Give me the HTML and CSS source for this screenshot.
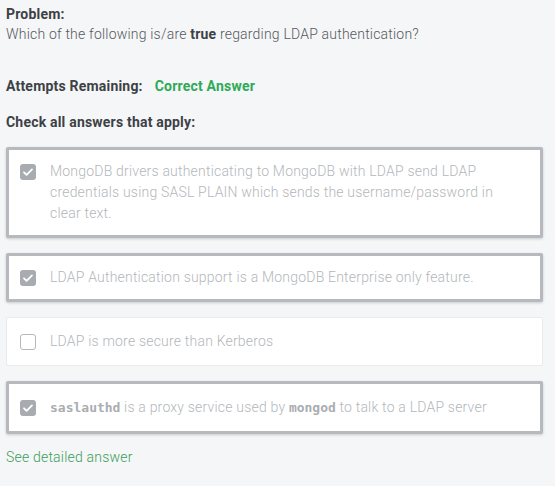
FILE: index.html
```html
<!DOCTYPE html>
<html>
<head>
<meta charset="utf-8">
<link rel="stylesheet" href="styles.css">
</head>
<body>
<div class="page">
  <div class="label">Problem:</div>
  <div class="question">Which of the following is/are <b>true</b> regarding LDAP authentication?</div>
  <div class="attempts"><span class="label">Attempts Remaining:</span><span class="correct">Correct Answer</span></div>
  <div class="label check-all">Check all answers that apply:</div>
  <div class="answers">
    <div class="answer selected">
      <span class="box checked"><svg viewBox="0 0 16 16" width="16" height="16"><path d="M4 8.3l2.6 2.6L12 5.4" fill="none" stroke="#fff" stroke-width="1.8" stroke-linecap="round" stroke-linejoin="round"/></svg></span>
      <span class="text">MongoDB drivers authenticating to MongoDB with LDAP send LDAP credentials using SASL PLAIN which sends the username/password in clear text.</span>
    </div>
    <div class="answer selected">
      <span class="box checked"><svg viewBox="0 0 16 16" width="16" height="16"><path d="M4 8.3l2.6 2.6L12 5.4" fill="none" stroke="#fff" stroke-width="1.8" stroke-linecap="round" stroke-linejoin="round"/></svg></span>
      <span class="text">LDAP Authentication support is a MongoDB Enterprise only feature.</span>
    </div>
    <div class="answer plain">
      <span class="box"></span>
      <span class="text">LDAP is more secure than Kerberos</span>
    </div>
    <div class="answer selected with-code">
      <span class="box checked"><svg viewBox="0 0 16 16" width="16" height="16"><path d="M4 8.3l2.6 2.6L12 5.4" fill="none" stroke="#fff" stroke-width="1.8" stroke-linecap="round" stroke-linejoin="round"/></svg></span>
      <span class="text"><code>saslauthd</code> is a proxy service used by <code>mongod</code> to talk to a LDAP server</span>
    </div>
  </div>
  <div class="detail">See detailed answer</div>
</div>
</body>
</html>
```
FILE: styles.css
```css
html, body {
  margin: 0;
  padding: 0;
  background: #f5f6f7;
}
body {
  font-family: Roboto, "Liberation Sans", sans-serif;
  font-size: 14px;
  letter-spacing: 0.2px;
  color: #494d52;
}
.page {
  padding: 4px 12px 0 6px;
}
.label {
  font-weight: 700;
  color: #3d4146;
  line-height: 20px;
}
.question {
  font-weight: 300;
  color: #55595e;
  line-height: 20px;
}
.question b {
  font-weight: 700;
  color: #3d4146;
}
.attempts {
  margin-top: 32px;
  line-height: 20px;
  display: flex;
  gap: 12px;
}
.correct {
  color: #2eaa58;
  font-weight: 700;
}
.check-all {
  margin-top: 16px;
}
.answers {
  margin-top: 15px;
  display: flex;
  flex-direction: column;
  gap: 15px;
}
.answer {
  display: flex;
  align-items: flex-start;
  gap: 14px;
  background: #fff;
  border: 3px solid #b6babe;
  border-radius: 2px;
  padding: 11px 36px 11px 11px;
  box-shadow: 0 1px 3px rgba(0,0,0,0.18);
}
.answer.plain {
  border: 1px solid #e9ebed;
  padding: 13px 38px 13px 13px;
  box-shadow: none;
}
.answer.with-code {
  padding-top: 13px;
  padding-bottom: 13px;
}
.box {
  flex: none;
  width: 16px;
  height: 16px;
  margin-top: 3px;
  border-radius: 3px;
  box-sizing: border-box;
  border: 1.5px solid #b3b7bb;
  display: flex;
}
.box.checked {
  background: #a8acb0;
  border: none;
}
.text {
  font-weight: 300;
  color: #b3b7bb;
  line-height: 21px;
}
code {
  font-family: "DejaVu Sans Mono", monospace;
  font-size: 13px;
  letter-spacing: 0;
  font-weight: 700;
  color: #a9adb1;
}
.detail {
  margin-top: 13px;
  color: #3c9e5a;
  font-weight: 300;
  line-height: 20px;
}
```
